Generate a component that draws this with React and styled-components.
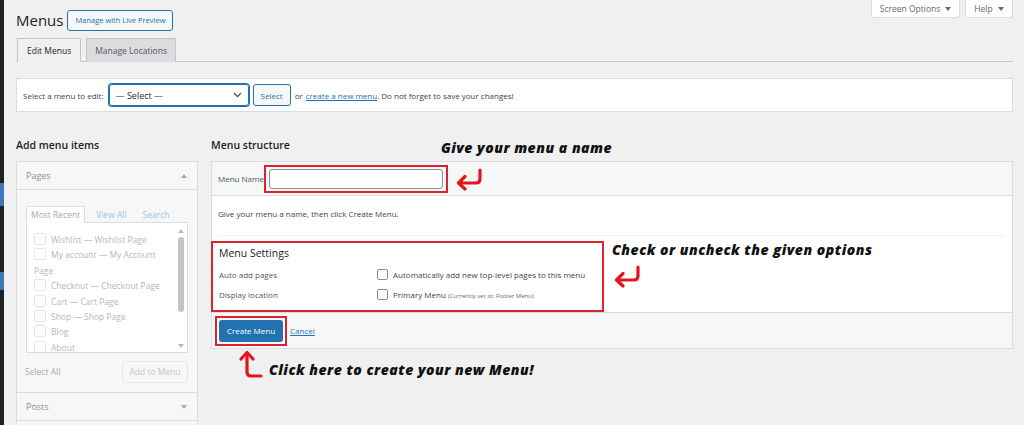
import React from "react";
import styled, { createGlobalStyle } from "styled-components";

const Global = createGlobalStyle`
  html, body { margin: 0; padding: 0; }
  body {
    background: #f0f0f1;
    font-family: "Open Sans", "Noto Sans", sans-serif;
    color: #3c434a;
    height: 425px;
    overflow: hidden;
  }
  * { box-sizing: border-box; }
`;

const Page = styled.div`
  display: flex;
  height: 425px;
  overflow: hidden;
`;

const Strip = styled.div`
  width: 4px;
  flex: none;
  background: linear-gradient(
    to bottom,
    #1d2327 0, #1d2327 183px,
    #3b78b8 183px, #3b78b8 206px,
    #1d2327 206px, #1d2327 272px,
    #3b78b8 272px, #3b78b8 290px,
    #1d2327 290px
  );
`;

const Main = styled.div`
  flex: 1;
  padding: 0 11px 0 12px;
  min-width: 0;
`;

const TopRow = styled.div`
  display: flex;
  justify-content: space-between;
  align-items: flex-start;
  height: 38px;
`;

const TitleGroup = styled.div`
  display: flex;
  align-items: center;
  margin-top: 9px;
`;

const Title = styled.h1`
  margin: 0;
  font-size: 15px;
  font-weight: 400;
  color: #1d2327;
  line-height: 22px;
`;

const OutlineButton = styled.button`
  margin-left: 4px;
  height: 21px;
  padding: 0 7px;
  border: 1px solid #2271b1;
  border-radius: 3px;
  background: #f6f7f7;
  color: #2271b1;
  font-family: inherit;
  font-size: 7.5px;
`;

const MetaLinks = styled.div`
  display: flex;
  gap: 5px;
`;

const MetaTab = styled.button`
  height: 18px;
  width: ${(p) => p.$w}px;
  border: 1px solid #dcdcde;
  border-top: none;
  border-radius: 0 0 3px 3px;
  background: #fff;
  color: #646970;
  font-family: inherit;
  font-size: 8.5px;
  display: flex;
  align-items: center;
  justify-content: center;
  gap: 5px;
  &::after {
    content: "";
    border-left: 3px solid transparent;
    border-right: 3px solid transparent;
    border-top: 4px solid #646970;
  }
`;

const Tabs = styled.div`
  display: flex;
  gap: 5px;
  height: 24px;
  border-bottom: 1px solid #c3c4c7;
  padding-left: 1px;
`;

const Tab = styled.div`
  height: 24px;
  padding: 0 ${(p) => (p.$active ? 9 : 8)}px;
  margin-bottom: -1px;
  border: 1px solid #c3c4c7;
  border-bottom: ${(p) => (p.$active ? "1px solid #f0f0f1" : "none")};
  background: ${(p) => (p.$active ? "#f0f0f1" : "#dcdcde")};
  color: ${(p) => (p.$active ? "#1d2327" : "#50575e")};
  font-size: 8.5px;
  font-weight: 500;
  display: flex;
  align-items: center;
`;

const SelectPanel = styled.div`
  margin-top: 16px;
  height: 34px;
  background: #fff;
  border: 1px solid #dcdcde;
  display: flex;
  align-items: center;
  padding: 0 6px;
  font-size: 8px;
  color: #3c434a;
`;

const SelectBox = styled.div`
  margin-left: 5px;
  width: 140px;
  height: 22px;
  border: 1px solid #2271b1;
  box-shadow: 0 0 0 1px #2271b1;
  border-radius: 3px;
  display: flex;
  align-items: center;
  justify-content: space-between;
  padding: 0 6px;
  font-size: 9px;
  color: #2c3338;
`;

const SmallButton = styled.button`
  margin: 0 4px;
  height: 22px;
  padding: 0 7px;
  border: 1px solid #2271b1;
  border-radius: 3px;
  background: #f6f7f7;
  color: #2271b1;
  font-family: inherit;
  font-size: 8px;
`;

const Link = styled.a`
  color: #2271b1;
  text-decoration: underline;
  margin-left: 3px;
`;

const Columns = styled.div`
  margin-top: 29px;
  display: flex;
  gap: 13px;
  align-items: flex-start;
`;

const LeftCol = styled.div`
  width: 182px;
  flex: none;
`;

const RightCol = styled.div`
  flex: 1;
  min-width: 0;
`;

const HeadRow = styled.div`
  height: 20px;
  display: flex;
  align-items: flex-start;
`;

const ColTitle = styled.h2`
  margin: -3px 0 0;
  font-size: 10.5px;
  font-weight: 600;
  color: #1d2327;
  line-height: 14px;
`;

const Note = styled.div`
  font-family: "Open Sans", "Noto Sans", sans-serif;
  font-style: italic;
  font-weight: 800;
  color: #111;
  font-size: ${(p) => p.$size || 14}px;
  letter-spacing: 0.5px;
  white-space: nowrap;
  line-height: 1;
`;

const Accordion = styled.div`
  border: 1px solid #dcdcde;
  background: #f6f7f7;
`;

const AccHead = styled.div`
  height: ${(p) => p.$h || 28}px;
  display: flex;
  align-items: center;
  justify-content: space-between;
  padding: 0 10px 0 9px;
  font-size: 9px;
  color: #8c8f94;
  border-top: ${(p) => (p.$top ? "1px solid #dcdcde" : "none")};
  border-bottom: ${(p) => (p.$bottom ? "1px solid #dcdcde" : "none")};
  &::after {
    content: "";
    border-left: 3px solid transparent;
    border-right: 3px solid transparent;
    ${(p) =>
      p.$open
        ? "border-bottom: 4px solid #a7aaad;"
        : "border-top: 4px solid #a7aaad;"}
  }
`;

const AccStub = styled.div`
  height: 20px;
  border-top: 1px solid #dcdcde;
`;

const AccBody = styled.div`
  padding: 15px 9px 0 9px;
  background: #f6f7f7;
`;

const InnerTabs = styled.div`
  display: flex;
  align-items: flex-end;
  height: 17px;
  gap: 6px;
  font-size: 8.5px;
`;

const InnerTab = styled.div`
  height: 17px;
  display: flex;
  align-items: center;
  padding: 0 4px;
  margin-bottom: -1px;
  color: ${(p) => (p.$active ? "#a7aaad" : "#9ec2e6")};
  background: ${(p) => (p.$active ? "#fff" : "transparent")};
  border: 1px solid ${(p) => (p.$active ? "#dcdcde" : "transparent")};
  border-bottom: 1px solid ${(p) => (p.$active ? "#fff" : "transparent")};
  position: relative;
`;

const ListBox = styled.div`
  height: 131px;
  border: 1px solid #dcdcde;
  background: #fff;
  display: flex;
`;

const List = styled.ul`
  flex: 1;
  list-style: none;
  margin: 0;
  padding: 9px 4px 0 7px;
  font-size: 8.5px;
  line-height: 15.4px;
  color: #b4b7ba;
  overflow: hidden;
`;

const Item = styled.li`
  &::before {
    content: "";
    display: inline-block;
    width: 10px;
    height: 10px;
    border: 1px solid #e4e5e7;
    border-radius: 2px;
    margin-right: 5px;
    vertical-align: -2px;
  }
`;

const Scrollbar = styled.div`
  width: 12px;
  flex: none;
  display: flex;
  flex-direction: column;
  align-items: center;
  padding: 6px 0 4px;
  gap: 4px;
  &::before, &::after {
    content: "";
    border-left: 3px solid transparent;
    border-right: 3px solid transparent;
  }
  &::before { border-bottom: 4px solid #b8babd; }
  &::after { border-top: 4px solid #b8babd; margin-top: auto; }
`;

const Thumb = styled.div`
  width: 6px;
  height: 75px;
  border-radius: 3px;
  background: #c3c4c7;
`;

const AccFoot = styled.div`
  height: 39px;
  display: flex;
  align-items: center;
  justify-content: space-between;
  font-size: 8.5px;
  color: #a7aaad;
  margin-left: -1px;
  padding-bottom: 2px;
`;

const GhostButton = styled.button`
  height: 22px;
  width: 66px;
  border: 1px solid #e4e5e7;
  border-radius: 3px;
  background: #f6f7f7;
  color: #c3c4c7;
  font-family: inherit;
  font-size: 8.5px;
`;

const Panel = styled.div`
  border: 1px solid #dcdcde;
  background: #fff;
`;

const PanelHead = styled.div`
  height: 34px;
  background: #f6f7f7;
  border-bottom: 1px solid #dcdcde;
  display: flex;
  align-items: center;
  padding-left: 6px;
  font-size: 8px;
  color: #50575e;
`;

const RedBox = styled.div`
  border: 2px solid #d9232e;
  padding: ${(p) => p.$pad || "2px 3px"};
  display: ${(p) => (p.$block ? "block" : "flex")};
  align-items: center;
  width: ${(p) => (p.$w ? p.$w + "px" : "auto")};
  flex: none;
`;

const NameInput = styled.div`
  width: 174px;
  height: 20px;
  border: 1px solid #8c8f94;
  border-radius: 3px;
  background: #fff;
`;

const PanelBody = styled.div`
  padding: 0 7px 0 0;
`;

const Intro = styled.p`
  margin: 0 0 0 6px;
  padding: 12px 0 16px;
  font-size: 8px;
  color: #3c434a;
  border-bottom: 1px solid #f0f0f1;
`;

const SettingsRow = styled.div`
  display: flex;
  align-items: flex-start;
  margin-top: 5px;
  margin-left: -1px;
  gap: 8px;
`;

const SettingsTitle = styled.h3`
  margin: 0;
  padding: 3px 0 4px;
  font-size: 10.5px;
  font-weight: 500;
  color: #1d2327;
  line-height: 14px;
`;

const FieldRow = styled.div`
  display: flex;
  align-items: center;
  height: 20px;
  font-size: 8px;
  color: #50575e;
`;

const FieldLabel = styled.div`
  width: 158px;
  flex: none;
`;

const Check = styled.span`
  width: 11px;
  height: 11px;
  border: 1px solid #8c8f94;
  border-radius: 2px;
  margin-right: 5px;
  flex: none;
`;

const FieldText = styled.span`
  color: #3c434a;
`;

const Small = styled.span`
  font-size: 6px;
  color: #646970;
  margin-left: 2px;
`;

const SideNote = styled.div`
  display: flex;
  flex-direction: column;
  gap: 7px;
  padding-top: 2px;
`;

const PanelFoot = styled.div`
  height: 36px;
  background: #f6f7f7;
  border-top: 1px solid #dcdcde;
  display: flex;
  align-items: center;
  padding-left: 3px;
  font-size: 8px;
`;

const PrimaryButton = styled.button`
  width: 64px;
  height: 22px;
  border: none;
  border-radius: 3px;
  background: #2271b1;
  color: #fff;
  font-family: inherit;
  font-size: 8px;
`;

const BottomNote = styled.div`
  display: flex;
  align-items: flex-end;
  margin-left: 28px;
  gap: 6px;
`;

const ReturnArrow = () => (
  <svg width="30" height="24" viewBox="0 0 30 24" fill="none" stroke="#e3161f" strokeWidth="3.2" strokeLinecap="round" strokeLinejoin="round">
    <path d="M26 3 V12 Q26 16 22 16 H5" />
    <path d="M11 9.5 L4.5 16 L11 22" />
  </svg>
);

const UpArrow = () => (
  <svg width="24" height="31" viewBox="0 0 24 31" fill="none" stroke="#e3161f" strokeWidth="3.2" strokeLinecap="round" strokeLinejoin="round">
    <path d="M8 4 V23 Q8 27 12 27 H22" />
    <path d="M2 10 L8 3.5 L14 10" />
  </svg>
);

const Chevron = () => (
  <svg width="9" height="6" viewBox="0 0 9 6" fill="none" stroke="#50575e" strokeWidth="1.4">
    <path d="M1 1 L4.5 4.5 L8 1" />
  </svg>
);

const pages = [
  "Wishlist — Wishlist Page",
  "My account — My Account Page",
  "Checkout — Checkout Page",
  "Cart — Cart Page",
  "Shop — Shop Page",
  "Blog",
  "About",
];

export default function App() {
  return (
    <>
      <Global />
      <Page>
        <Strip />
        <Main>
          <TopRow>
            <TitleGroup>
              <Title>Menus</Title>
              <OutlineButton>Manage with Live Preview</OutlineButton>
            </TitleGroup>
            <MetaLinks>
              <MetaTab $w={89}>Screen Options</MetaTab>
              <MetaTab $w={48}>Help</MetaTab>
            </MetaLinks>
          </TopRow>
          <Tabs>
            <Tab $active>Edit Menus</Tab>
            <Tab>Manage Locations</Tab>
          </Tabs>
          <SelectPanel>
            Select a menu to edit:
            <SelectBox>
              — Select —
              <Chevron />
            </SelectBox>
            <SmallButton>Select</SmallButton>
            or<Link>create a new menu</Link>. Do not forget to save your changes!
          </SelectPanel>
          <Columns>
            <LeftCol>
              <HeadRow>
                <ColTitle>Add menu items</ColTitle>
              </HeadRow>
              <Accordion>
                <AccHead $open $bottom>Pages</AccHead>
                <AccBody>
                  <InnerTabs>
                    <InnerTab $active>Most Recent</InnerTab>
                    <InnerTab>View All</InnerTab>
                    <InnerTab>Search</InnerTab>
                  </InnerTabs>
                  <ListBox>
                    <List>
                      {pages.map((p) => (
                        <Item key={p}>{p}</Item>
                      ))}
                    </List>
                    <Scrollbar>
                      <Thumb />
                    </Scrollbar>
                  </ListBox>
                  <AccFoot>
                    <span>Select All</span>
                    <GhostButton>Add to Menu</GhostButton>
                  </AccFoot>
                </AccBody>
                <AccHead $top>Posts</AccHead>
                <AccStub />
              </Accordion>
            </LeftCol>
            <RightCol>
              <HeadRow>
                <ColTitle>Menu structure</ColTitle>
                <Note style={{ marginLeft: 151, marginTop: 0 }}>Give your menu a name</Note>
              </HeadRow>
              <Panel>
                <PanelHead>
                  Menu Name
                  <RedBox $pad="2px 3px">
                    <NameInput />
                  </RedBox>
                  <span style={{ marginLeft: 6, display: "flex" }}>
                    <ReturnArrow />
                  </span>
                </PanelHead>
                <PanelBody>
                  <Intro>Give your menu a name, then click Create Menu.</Intro>
                  <SettingsRow>
                    <RedBox $block $w={393} $pad="0 6px 6px 6px">
                      <SettingsTitle>Menu Settings</SettingsTitle>
                      <FieldRow>
                        <FieldLabel>Auto add pages</FieldLabel>
                        <Check />
                        <FieldText>Automatically add new top-level pages to this menu</FieldText>
                      </FieldRow>
                      <FieldRow>
                        <FieldLabel>Display location</FieldLabel>
                        <Check />
                        <FieldText>
                          Primary Menu<Small>(Currently set to: Footer Menu)</Small>
                        </FieldText>
                      </FieldRow>
                    </RedBox>
                    <SideNote>
                      <Note>Check or uncheck the given options</Note>
                      <ReturnArrow />
                    </SideNote>
                  </SettingsRow>
                </PanelBody>
                <PanelFoot>
                  <RedBox $pad="2px 2px">
                    <PrimaryButton>Create Menu</PrimaryButton>
                  </RedBox>
                  <Link>Cancel</Link>
                </PanelFoot>
              </Panel>
              <BottomNote>
                <UpArrow />
                <Note $size={14} style={{ marginBottom: 3 }}>Click here to create your new Menu!</Note>
              </BottomNote>
            </RightCol>
          </Columns>
        </Main>
      </Page>
    </>
  );
}
